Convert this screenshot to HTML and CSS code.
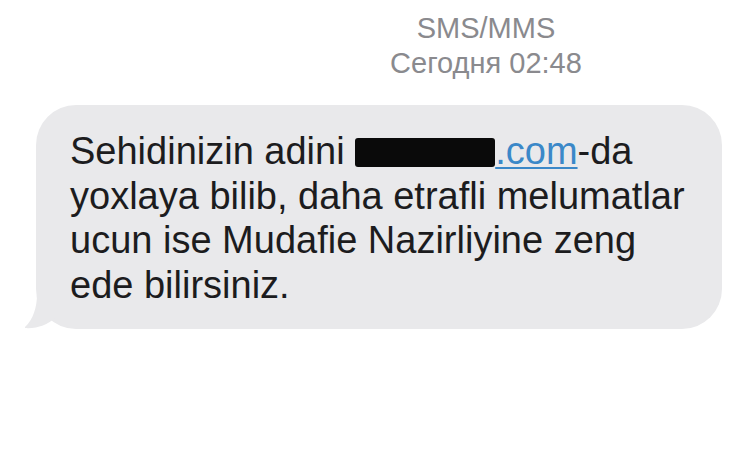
FILE: index.html
```html
<!DOCTYPE html>
<html lang="en">
<head>
  <meta charset="UTF-8">
  <meta name="viewport" content="width=device-width, initial-scale=1.0">
  <title>SMS/MMS</title>
  <link rel="stylesheet" href="styles.css">
</head>
<body>
  <!-- Thread header -->
  <div class="thread-header">
    <div class="thread-type">SMS/MMS</div>
    <div class="thread-time">Сегодня 02:48</div>
  </div>

  <!-- Incoming message -->
  <div class="message-row">
    <div class="bubble">
      <svg class="bubble-tail" width="40" height="40" viewBox="0 0 40 40">
        <path d="M12 0 C12 14 8 26 -1 34 C12 35 22 31 30 24 L40 24 L40 0 Z" fill="#e9e9eb"/>
      </svg>
      <p class="bubble-text">Sehidinizin adini <a class="link"><span class="redacted"></span>.com</a>-da<br>
        yoxlaya bilib, daha etrafli melumatlar<br>
        ucun ise Mudafie Nazirliyine zeng<br>
        ede bilirsiniz.</p>
    </div>
  </div>
</body>
</html>
```

FILE: styles.css
```css
/* General styling */
body {
  font-family: "Liberation Sans", Arial, sans-serif;
  background-color: #fff;
  margin: 0;
  color: #1c1c1e;
}
.thread-header {
  margin-left: 222px;
  padding-top: 11px;
  text-align: center;
  color: #8a8a8e;
  font-size: 29px;
  line-height: 35px;
}
/* Message bubble */
.message-row {
  padding: 24px 28px 0 36px;
}
.bubble {
  position: relative;
  background-color: #e9e9eb;
  border-radius: 40px;
  padding: 24px 18px 22px 34px;
}
.bubble-tail {
  position: absolute;
  left: -11px;
  bottom: -5px;
  width: 40px;
  height: 40px;
}
.bubble-text {
  position: relative;
  margin: 0;
  font-size: 38px;
  line-height: 44.5px;
  white-space: nowrap;
}
.link {
  color: #3b88c8;
  text-decoration: underline;
  text-decoration-thickness: 2px;
  text-underline-offset: 3px;
}
.redacted {
  display: inline-block;
  width: 140px;
  height: 29px;
  vertical-align: -3px;
  background-color: #0a0a0a;
  border-radius: 3px;
}
```
